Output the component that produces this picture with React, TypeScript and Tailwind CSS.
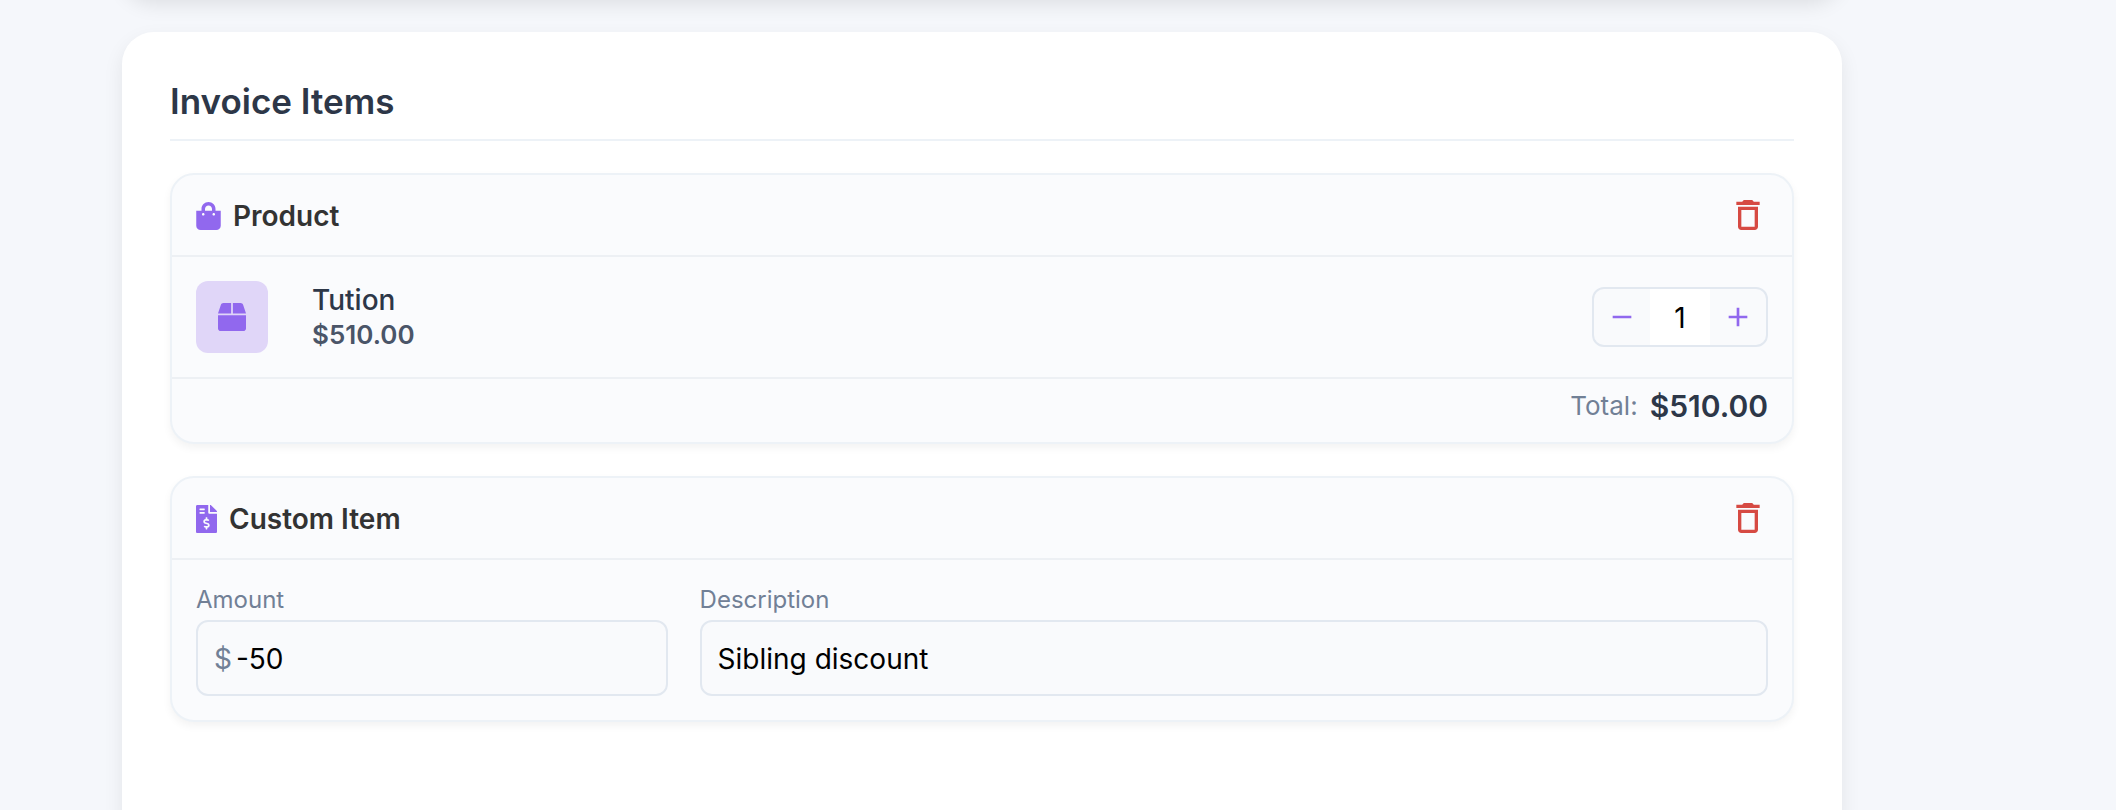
import { useState } from "react"
import { FaBox, FaFileInvoiceDollar, FaShoppingBag } from "react-icons/fa"
import { MdAdd, MdDeleteOutline, MdRemove } from "react-icons/md"
import type { ReactNode } from "react"

function ItemHeader({ icon, title }: { icon: ReactNode; title: string }) {
  return (
    <div className="flex h-[82px] items-center justify-between border-b-2 border-[#edf0f4] px-6">
      <div className="flex items-center gap-3 pt-0.5 text-[#9168ee]">
        {icon}
        <h3 className="text-[28px] leading-9 font-semibold text-[#333333]">{title}</h3>
      </div>
      <button type="button" aria-label={`Remove ${title}`} className="text-[#d64a43]">
        <MdDeleteOutline className="size-10" />
      </button>
    </div>
  )
}

export default function App() {
  const [quantity, setQuantity] = useState(1)
  const [amount, setAmount] = useState("-50")
  const [description, setDescription] = useState("Sibling discount")
  const total = `$${(510 * quantity).toFixed(2)}`

  return (
    <main className="h-screen overflow-hidden bg-[#f5f7fb] pr-[274px] pl-[122px] font-['Inter',sans-serif]">
      <div className="-mt-10 h-10 rounded-b-[32px] bg-white shadow-[0_4px_20px_rgba(0,0,0,0.1)]" />

      <section className="mt-8 min-h-screen rounded-[32px] bg-white px-12 pt-12 shadow-[0_8px_20px_rgba(0,0,0,0.08)]">
        <h2 className="border-b-2 border-[#edf2f7] pb-4 text-[35px] leading-[43px] font-semibold text-[#2d3748]">
          Invoice Items
        </h2>

        <div className="mt-8 flex flex-col gap-8">
          <article className="rounded-3xl border-2 border-[#edf2f7] bg-[#fafbfd] shadow-[0_4px_8px_rgba(0,0,0,0.05)]">
            <ItemHeader icon={<FaShoppingBag className="h-7 w-[25px]" />} title="Product" />
            <div className="flex items-center border-b-2 border-[#edf0f4] p-6">
              <div className="flex size-[72px] items-center justify-center rounded-xl bg-[#e0d6f8]">
                <FaBox className="size-7 text-[#9168ee]" />
              </div>
              <div className="ml-11 flex-1 pt-0.5">
                <p className="text-[28px] leading-[34px] font-medium text-[#2d3748]">Tution</p>
                <p className="text-[26px] leading-9 font-semibold text-[#4a5568]">$510.00</p>
              </div>
              <div className="flex h-[60px] overflow-hidden rounded-xl border-2 border-[#e2e8f0] bg-[#f9fafc] text-[#9168ee]">
                <button
                  type="button"
                  aria-label="Decrease quantity"
                  className="flex w-14 items-center justify-center"
                  onClick={() => setQuantity(Math.max(1, quantity - 1))}
                >
                  <MdRemove className="size-8" />
                </button>
                <input
                  aria-label="Quantity"
                  className="w-[60px] bg-white pt-0.5 text-center text-[28px] leading-9 text-black outline-none"
                  value={quantity}
                  onChange={(e) => setQuantity(Number(e.target.value) || 1)}
                />
                <button
                  type="button"
                  aria-label="Increase quantity"
                  className="flex w-14 items-center justify-center"
                  onClick={() => setQuantity(quantity + 1)}
                >
                  <MdAdd className="size-8" />
                </button>
              </div>
            </div>
            <div className="flex h-[63px] items-center justify-end gap-3 px-6 pb-2.5">
              <span className="text-[26px] leading-9 text-[#718096]">Total:</span>
              <span className="text-[30px] leading-9 font-semibold text-[#2d3748]">{total}</span>
            </div>
          </article>

          <article className="rounded-3xl border-2 border-[#edf2f7] bg-[#fafbfd] shadow-[0_4px_8px_rgba(0,0,0,0.05)]">
            <ItemHeader icon={<FaFileInvoiceDollar className="h-7 w-[21px]" />} title="Custom Item" />
            <div className="flex gap-8 p-6">
              <div className="w-[30%]">
                <label htmlFor="amount" className="block pt-0.5 pb-1.5 text-[24px] leading-7 text-[#718096]">
                  Amount
                </label>
                <div className="flex h-[76px] items-center gap-1 rounded-xl border-2 border-[#e2e8f0] bg-[#f9fafc] px-4 pt-0.5">
                  <span className="text-[28px] leading-9 text-[#718096]">$</span>
                  <input
                    id="amount"
                    className="w-full min-w-0 flex-1 text-[28px] leading-9 text-black outline-none"
                    value={amount}
                    onChange={(e) => setAmount(e.target.value)}
                  />
                </div>
              </div>
              <div className="flex-1">
                <label htmlFor="description" className="block pt-0.5 pb-1.5 text-[24px] leading-7 text-[#718096]">
                  Description
                </label>
                <input
                  id="description"
                  className="h-[76px] w-full rounded-xl border-2 border-[#e2e8f0] bg-[#f9fafc] px-4 pt-0.5 text-[28px] leading-9 text-black outline-none"
                  value={description}
                  onChange={(e) => setDescription(e.target.value)}
                />
              </div>
            </div>
          </article>
        </div>
      </section>
    </main>
  )
}
